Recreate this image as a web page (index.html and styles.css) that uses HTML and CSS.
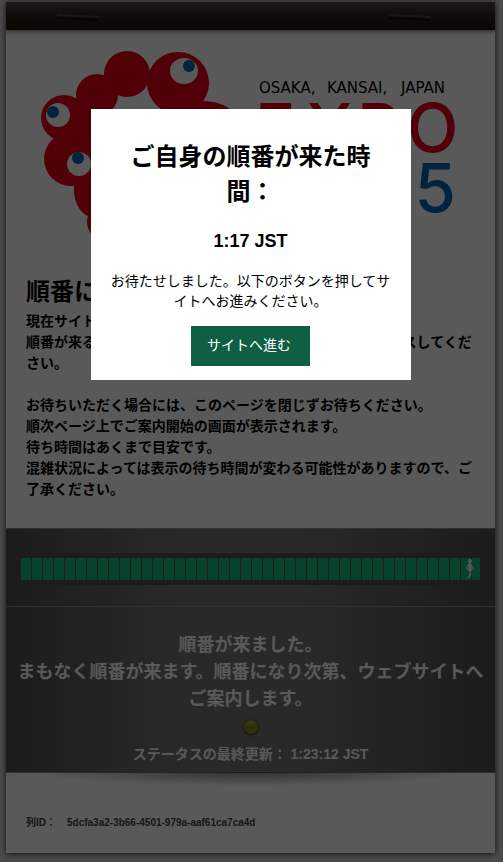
FILE: index.html
```html
<!DOCTYPE html>
<html lang="ja">
<head>
<meta charset="UTF-8">
<meta name="viewport" content="width=device-width, initial-scale=1">
<title>順番待ち</title>
<link rel="stylesheet" href="styles.css">
</head>

<body>
<div id="page" class="page">
<header class="top-bar">
<svg class="staple" viewBox="0 0 42 8" aria-hidden="true">
<path d="M0 4L42 6V8L0 6Z" fill="#120c06"/>
<path d="M0 1L42 3V5L0 3Z" fill="#4a4644"/>
</svg>
<svg class="staple" viewBox="0 0 42 8" aria-hidden="true">
<path d="M0 4L42 6V8L0 6Z" fill="#120c06"/>
<path d="M0 1L42 3V5L0 3Z" fill="#4a4644"/>
</svg>
</header>

<main>
<section class="intro">
<svg class="logo" viewBox="26 40 449 210" role="img" aria-label="OSAKA, KANSAI, JAPAN EXPO 2025">
<g fill="#e60012">
<circle cx="127" cy="74" r="23"/>
<circle cx="178" cy="83" r="31"/>
<circle cx="97" cy="95" r="21"/>
<circle cx="64" cy="118" r="23"/>
<circle cx="71" cy="159" r="27"/>
<path d="M70 100H112V180H70Z"/>
<ellipse cx="93" cy="190" rx="19" ry="27"/>
<circle cx="105" cy="222" r="18"/>
<ellipse cx="203" cy="125" rx="36" ry="24"/>
</g>
<g fill="#fff">
<ellipse cx="184" cy="71" rx="14" ry="13"/>
<circle cx="58" cy="115" r="12"/>
<circle cx="79" cy="164" r="12"/>
</g>
<g fill="#0068b7">
<circle cx="189" cy="66" r="6"/>
<circle cx="53" cy="112" r="6"/>
<circle cx="78" cy="158" r="6"/>
</g>
<text class="logo-place" y="93"><tspan x="259">OSAKA,</tspan><tspan x="327">KANSAI,</tspan><tspan x="401">JAPAN</tspan></text>
<text class="logo-expo" y="152"><tspan x="255">E</tspan><tspan x="306">X</tspan><tspan x="357">P</tspan><tspan x="407">O</tspan></text>
<text class="logo-year" x="456" y="212">2025</text>
</svg>
<h1>順番になりました</h1>
<p>現在サイトへのアクセスが集中しています。<br>
順番が来るまでお待ちいただくか、時間をおいて再度アクセスしてください。</p>
<p>お待ちいただく場合には、このページを閉じずお待ちください。<br>
順次ページ上でご案内開始の画面が表示されます。<br>
待ち時間はあくまで目安です。<br>
混雑状況によっては表示の待ち時間が変わる可能性がありますので、ご了承ください。</p>
</section>

<section class="queue">
<div class="progress-area">
<div class="progress" role="progressbar" aria-label="待ち状況" aria-valuenow="100" aria-valuemin="0" aria-valuemax="100">
<div class="progress-fill">
<svg class="walker" viewBox="0 0 8 20" aria-hidden="true">
<circle cx="4" cy="2" r="2" fill="#fff"/>
<path d="M3 5L1 8V11M5 5L6 8L8 11M4 11L4 15L2 19M4 11L5 15L3 19" fill="none" stroke="#fff" stroke-width="1"/>
<path d="M3 4H5L6 12H2Z" fill="#fff"/>
</svg>
</div>
</div>
</div>
<div class="status">
<p class="message">順番が来ました。<br>まもなく順番が来ます。順番になり次第、ウェブサイトへご案内します。</p>
<div class="light"></div>
<p class="updated">ステータスの最終更新： 1:23:12 JST</p>
</div>
</section>
</main>

<footer>
<span>列ID：</span>
<span>5dcfa3a2-3b66-4501-979a-aaf61ca7ca4d</span>
</footer>
</div>

<div class="overlay">
<div class="dialog" role="dialog" aria-modal="true" aria-labelledby="dialog-title">
<h2 id="dialog-title">ご自身の順番が来た時間：</h2>
<p class="turn-time">1:17 JST</p>
<p>お待たせしました。以下のボタンを押してサイトへお進みください。</p>
<button type="button">サイトへ進む</button>
</div>
</div>
</body>
</html>
```

FILE: styles.css
```css
* {
  box-sizing:border-box;
}

body {
  margin:0;
  padding:2px 8px 9px 6px;
  background:#d6d6d6;
  color:#000;
  font-family:"Liberation Sans", "Noto Sans CJK JP", sans-serif;
  font-size:14px;
}

h1, h2, p {
  margin:0;
}

.page {
  background:#fff;
  box-shadow:0 1px 6px #333;
}

.top-bar {
  height:28px;
  display:flex;
  justify-content:space-between;
  padding:11px 64px 0 51px;
  background:linear-gradient(#50483e, #30271e 40%, #1c1208);
  box-shadow:0 2px 4px #888;
}

.staple {
  width:42px;
  height:8px;
}

/* intro */
.intro {
  padding:10px 20px 28px;
  font-weight:bold;
  line-height:21px;
}

.logo {
  display:block;
  width:100%;
}

.logo-place {
  font-family:"DejaVu Sans", sans-serif;
  font-size:15px;
  font-weight:normal;
}

.logo-expo,
.logo-year {
  font-family:Inter, sans-serif;
  font-size:67px;
  font-weight:500;
  fill:#e60012;
}

.logo-year {
  fill:#0068b7;
  text-anchor:end;
}

.intro h1 {
  margin-top:23px;
  font-size:24px;
  line-height:38px;
}

.intro p + p {
  margin-top:21px;
}

/* queue */
.queue {
  position:relative;
  background:linear-gradient(90deg, #505050, #767676 35%, #767676 60%, #505050);
  border-top:1px solid #8a8a8a;
  border-bottom:1px solid #8a8a8a;
  color:#fff;
  font-weight:bold;
  text-align:center;
}

.queue:after {
  content:"";
  position:absolute;
  left:5%;
  right:5%;
  top:100%;
  height:14px;
  background:radial-gradient(ellipse at 50% 0, rgba(0,0,0,.45), rgba(0,0,0,0) 70%);
}

.progress-area {
  padding:24px 10px 21px;
  border-bottom:1px solid #8a8a8a;
}

.progress {
  padding:5px;
  background:#505050;
}

.progress-fill {
  display:flex;
  justify-content:flex-end;
  height:22px;
  padding:1px 6px 1px 0;
  background:repeating-linear-gradient(90deg, #17ba7e 0, #17ba7e 10px, #505050 10px, #505050 11px);
}

.walker {
  width:8px;
  height:20px;
}

.status {
  padding:25px 10px 7px;
}

.message {
  font-size:18px;
  line-height:27px;
}

.light {
  width:14px;
  height:14px;
  margin:7px auto 10px;
  border-radius:50%;
  background:linear-gradient(#a8ac58, #7c8418 50%, #8c9a00);
  border:1px solid #7a8600;
  box-shadow:0 1px 3px #222;
}

.updated {
  line-height:21px;
}

footer {
  display:flex;
  gap:11px;
  padding:40px 20px 20px;
  color:#444;
  font-size:10px;
  font-weight:bold;
  line-height:20px;
}

/* dialog */
.overlay {
  position:fixed;
  top:0;
  right:0;
  bottom:0;
  left:0;
  display:flex;
  justify-content:center;
  align-items:flex-start;
  padding:109px 8px 0 6px;
  background:rgba(0,0,0,.65);
}

.dialog {
  width:320px;
  padding:30px 20px 14px;
  background:#fff;
  line-height:20px;
  text-align:center;
}

.dialog h2 {
  font-size:24px;
  line-height:35px;
}

.dialog .turn-time {
  margin:22px 0 20px;
  font-size:18px;
  font-weight:bold;
}

.dialog button {
  margin-top:15px;
  padding:9px 19px 11px 16px;
  border:0;
  background:#0e5f43;
  color:#fff;
  font:14px/20px "Liberation Sans", "Noto Sans CJK JP", sans-serif;
  cursor:pointer;
}
```
